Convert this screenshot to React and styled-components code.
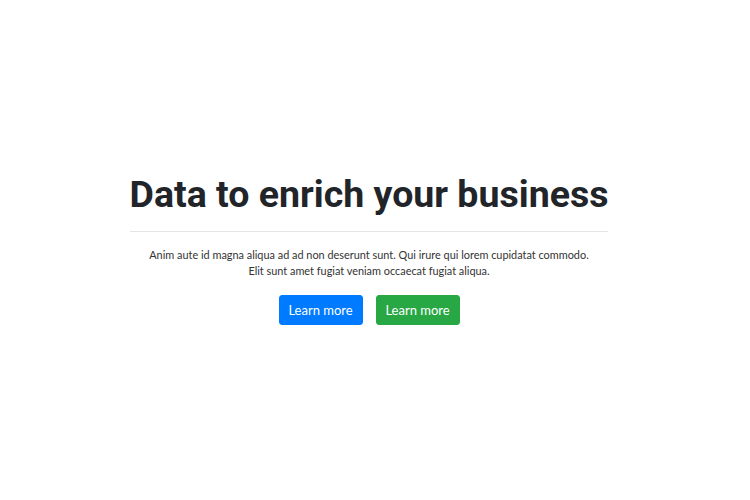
import React from "react";
import styled, { createGlobalStyle } from "styled-components";

const GlobalStyle = createGlobalStyle`
  html, body {
    margin: 0;
    padding: 0;
    background: #fff;
  }
  body {
    font-family: Lato, "Open Sans", sans-serif;
    color: #212529;
  }
`;

const Page = styled.div`
  width: 750px;
  height: 500px;
  display: flex;
  justify-content: center;
  align-items: flex-start;
  padding: 171px 12px 0 0;
  box-sizing: border-box;
`;

const Hero = styled.div`
  width: 478px;
  display: flex;
  flex-direction: column;
  align-items: center;
`;

const Title = styled.h1`
  margin: 0;
  font-family: Roboto, "Liberation Sans", sans-serif;
  font-weight: 700;
  font-size: 37.5px;
  line-height: 46px;
  color: #212529;
  white-space: nowrap;
`;

const Rule = styled.hr`
  width: 100%;
  margin: 14px 0 15px;
  border: 0;
  border-top: 1px solid #e5e5e5;
`;

const Lead = styled.p`
  margin: 0 0 16px;
  font-size: 10.9px;
  line-height: 16px;
  text-align: center;
  color: #333;
  white-space: nowrap;
`;

const Actions = styled.div`
  display: flex;
  gap: 13px;
`;

const Button = styled.button`
  height: 30px;
  width: 84px;
  padding: 0;
  border: 1px solid ${(p) => p.$bg};
  border-radius: 3px;
  background: ${(p) => p.$bg};
  color: #fff;
  font-family: Lato, "Open Sans", sans-serif;
  font-size: 13px;
  cursor: pointer;
`;

export default function App() {
  return (
    <>
      <GlobalStyle />
      <Page>
        <Hero>
          <Title>Data to enrich your business</Title>
          <Rule />
          <Lead>
            Anim aute id magna aliqua ad ad non deserunt sunt. Qui irure qui lorem cupidatat commodo.
            <br />
            Elit sunt amet fugiat veniam occaecat fugiat aliqua.
          </Lead>
          <Actions>
            <Button $bg="#007bff">Learn more</Button>
            <Button $bg="#28a745">Learn more</Button>
          </Actions>
        </Hero>
      </Page>
    </>
  );
}
